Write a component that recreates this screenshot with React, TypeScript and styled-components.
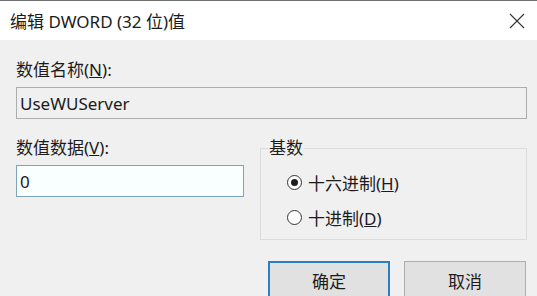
import React from 'react';
import styled, { createGlobalStyle } from 'styled-components';

const GlobalStyle = createGlobalStyle`
  html, body {
    margin: 0;
    padding: 0;
    overflow: hidden;
  }
  body {
    font-family: "Noto Sans", "Noto Sans CJK SC", sans-serif;
    color: #1b1b1b;
  }
`;

const Dialog = styled.div`
  width: 537px;
  height: 296px;
  background: #f0f0f0;
  border-top: 1px solid #707070;
  box-sizing: border-box;
  overflow: hidden;
  font-size: 17px;
`;

const TitleBar = styled.div`
  height: 39px;
  background: #ffffff;
  display: flex;
  align-items: center;
  justify-content: space-between;
  padding: 0 12px 0 10px;
  font-size: 17px;
`;

const CloseButton = styled.div`
  width: 16px;
  height: 16px;
  display: flex;
`;

const Body = styled.div`
  padding: 18px 10px 0 16px;
  display: flex;
  flex-direction: column;
`;

const Label = styled.div`
  line-height: 24px;
  height: 24px;
`;

const NameField = styled.div`
  margin-top: 5px;
  height: 32px;
  box-sizing: border-box;
  border: 1px solid #adadad;
  background: #f0f0f0;
  padding: 0 3px;
  display: flex;
  align-items: center;
`;

const MiddleRow = styled.div`
  margin-top: 17px;
  display: grid;
  grid-template-columns: 228px 267px;
  column-gap: 16px;
`;

const DataColumn = styled.div`
  display: flex;
  flex-direction: column;
  gap: 5px;
`;

const DataInput = styled.div`
  width: 228px;
  height: 32px;
  box-sizing: border-box;
  border: 1px solid #7ea3bd;
  background: #f9feff;
  padding: 0 3px;
  display: flex;
  align-items: center;
`;

const GroupBox = styled.fieldset`
  margin: 0;
  padding: 10px 0 0 26px;
  border: 1px solid #dcdcdc;
  height: 104px;
  box-sizing: border-box;
  display: flex;
  flex-direction: column;
  gap: 11px;
  min-width: 0;
`;

const Legend = styled.legend`
  margin-left: -19px;
  padding: 0 1px;
  line-height: 24px;
`;

const RadioRow = styled.label`
  display: flex;
  align-items: center;
  gap: 6px;
  height: 24px;
`;

const RadioCircle = styled.span<{ $checked?: boolean }>`
  flex: none;
  width: 15px;
  height: 15px;
  box-sizing: border-box;
  border-radius: 50%;
  border: 1px solid #333333;
  background: #ffffff;
  display: flex;
  align-items: center;
  justify-content: center;

  &::after {
    content: '';
    width: 7px;
    height: 7px;
    border-radius: 50%;
    background: ${p => (p.$checked ? '#1f1f1f' : 'transparent')};
  }
`;

const ButtonRow = styled.div`
  margin-top: 21px;
  display: flex;
  justify-content: flex-end;
  gap: 14px;
  padding-right: 1px;
`;

const Button = styled.div<{ $primary?: boolean }>`
  width: 122px;
  height: 38px;
  box-sizing: border-box;
  background: #e1e1e1;
  border: ${p => (p.$primary ? '2px solid #2b7fc0' : '1px solid #adadad')};
  display: flex;
  align-items: center;
  justify-content: center;
`;

const App = () => {
  return (
    <>
      <GlobalStyle />
      <Dialog>
        <TitleBar>
          <span>编辑 DWORD (32 位)值</span>
          <CloseButton>
            <svg width="16" height="16" viewBox="0 0 16 16">
              <path d="M1 1 L15 15 M15 1 L1 15" stroke="#333" strokeWidth="1.1" fill="none" />
            </svg>
          </CloseButton>
        </TitleBar>
        <Body>
          <Label>数值名称(<u>N</u>):</Label>
          <NameField>UseWUServer</NameField>
          <MiddleRow>
            <DataColumn>
              <Label>数值数据(<u>V</u>):</Label>
              <DataInput>0</DataInput>
            </DataColumn>
            <GroupBox>
              <Legend>基数</Legend>
              <RadioRow>
                <RadioCircle $checked />
                <span>十六进制(<u>H</u>)</span>
              </RadioRow>
              <RadioRow>
                <RadioCircle />
                <span>十进制(<u>D</u>)</span>
              </RadioRow>
            </GroupBox>
          </MiddleRow>
          <ButtonRow>
            <Button $primary>确定</Button>
            <Button>取消</Button>
          </ButtonRow>
        </Body>
      </Dialog>
    </>
  );
};

export default App;
